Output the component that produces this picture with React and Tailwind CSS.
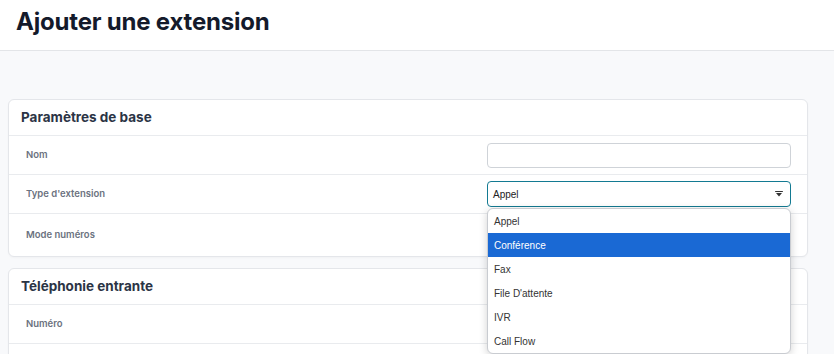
import React from "react";

const options = ["Appel", "Conférence", "Fax", "File D'attente", "IVR", "Call Flow"];

const Row = ({ label, children, last }) => (
  <div
    className={`flex items-center justify-between pl-[17px] pr-[16px] ${
      last ? "h-[42px]" : "h-[39px] border-b border-[#e9ebee]"
    }`}
  >
    <span className="text-[9.5px] font-semibold text-[#6b7280]">{label}</span>
    <div className="relative w-[304px]">{children}</div>
  </div>
);

const Card = ({ title, children }) => (
  <section className="ml-2 w-[800px] rounded-[6px] border border-[#e4e6ea] bg-white shadow-[0_1px_2px_rgba(0,0,0,0.03)]">
    <div className="flex h-[36px] items-center border-b border-[#e9ebee] px-3">
      <h2 className="text-[13.5px] font-bold text-[#2b3445]">{title}</h2>
    </div>
    {children}
  </section>
);

export default function App() {
  return (
    <div className="h-[354px] overflow-hidden bg-[#f8f9fb] font-['Inter',sans-serif]">
      <header className="flex h-[51px] items-start border-b border-[#e3e5e8] bg-white pl-4 pt-[6px]">
        <h1 className="text-[24px] font-bold leading-[32px] tracking-[-0.2px] text-[#141a2b]">
          Ajouter une extension
        </h1>
      </header>

      <div className="space-y-[11px] pt-[48px]">
        <Card title="Paramètres de base">
          <Row label="Nom">
            <input className="h-[25px] w-full rounded-[4px] border border-[#cfd3d8] bg-white" />
          </Row>
          <Row label="Type d'extension">
            <div className="flex h-[26px] w-full items-center justify-between rounded-[4px] border border-[#137a92] bg-white pl-[5px] pr-[7px] font-['Liberation_Sans',sans-serif] text-[10px] text-[#222]">
              <span>Appel</span>
              <svg width="8" height="6" viewBox="0 0 9 7">
                <rect x="0" y="0" width="9" height="1.2" fill="#333" />
                <path d="M1 2.2h7L4.5 6.5z" fill="#333" />
              </svg>
            </div>
            <ul className="absolute left-0 top-[27px] z-10 w-full overflow-hidden rounded-[6px] border border-[#c9ccd1] bg-white font-['Liberation_Sans',sans-serif] text-[10px] text-[#333] shadow-[0_2px_8px_rgba(0,0,0,0.18)]">
              {options.map((o) => (
                <li
                  key={o}
                  className={`flex h-[24px] items-center pl-[6px] ${
                    o === "Conférence" ? "bg-[#1a69d4] text-white" : ""
                  }`}
                >
                  {o}
                </li>
              ))}
            </ul>
          </Row>
          <Row label="Mode numéros" last>
            <div className="h-[25px]" />
          </Row>
        </Card>

        <Card title="Téléphonie entrante">
          <Row label="Numéro">
            <input className="h-[25px] w-full rounded-[4px] border border-[#cfd3d8] bg-white" />
          </Row>
          <Row label="" last>
            <div className="h-[25px]" />
          </Row>
        </Card>
      </div>
    </div>
  );
}
